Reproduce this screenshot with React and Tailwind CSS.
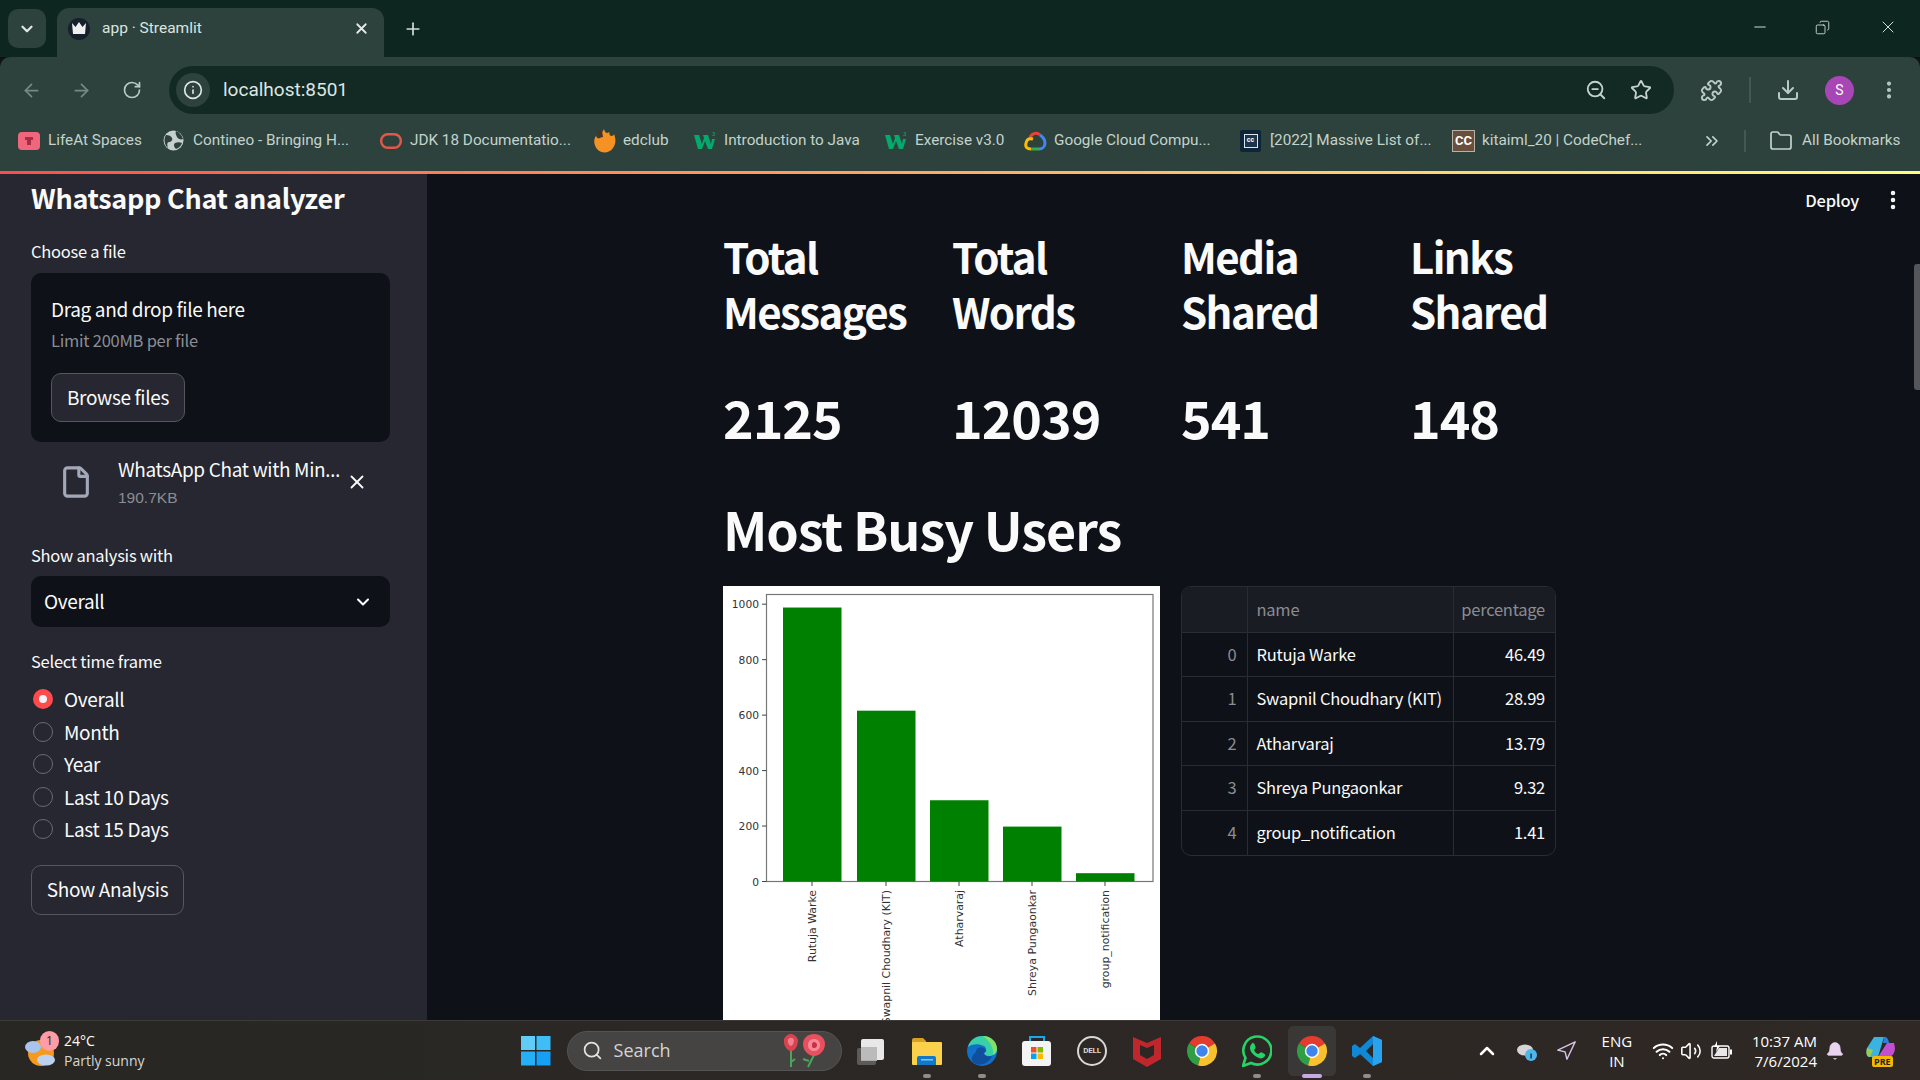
import { ArrowLeft, ArrowRight, RotateCw, Info, ZoomOut, Star, Puzzle, Download, MoreVertical, Plus, X, ChevronDown, ChevronsRight, Folder, Minus, Search, ChevronUp, Navigation, Wifi, Volume2, Bell, Copy, File } from 'lucide-react';

const bookmarks = [
  { label: 'LifeAt Spaces', width: 'w-[145px]', icon: 'lifeat' },
  { label: 'Contineo - Bringing H...', width: 'w-[217px]', icon: 'globe' },
  { label: 'JDK 18 Documentatio...', width: 'w-[213px]', icon: 'oracle' },
  { label: 'edclub', width: 'w-[101px]', icon: 'flame' },
  { label: 'Introduction to Java', width: 'w-[191px]', icon: 'w3' },
  { label: 'Exercise v3.0', width: 'w-[139px]', icon: 'w3' },
  { label: 'Google Cloud Compu...', width: 'w-[216px]', icon: 'gcloud' },
  { label: '[2022] Massive List of...', width: 'w-[212px]', icon: 'cc' },
  { label: 'kitaiml_20 | CodeChef...', width: 'w-[228px]', icon: 'chef' },
];

const stats = [
  { title: ['Total', 'Messages'], value: '2125' },
  { title: ['Total', 'Words'], value: '12039' },
  { title: ['Media', 'Shared'], value: '541' },
  { title: ['Links', 'Shared'], value: '148' },
];

const users = [
  { name: 'Rutuja Warke', pct: '46.49', count: 988 },
  { name: 'Swapnil Choudhary (KIT)', pct: '28.99', count: 616 },
  { name: 'Atharvaraj', pct: '13.79', count: 293 },
  { name: 'Shreya Pungaonkar', pct: '9.32', count: 198 },
  { name: 'group_notification', pct: '1.41', count: 30 },
];

const timeFrames = ['Overall', 'Month', 'Year', 'Last 10 Days', 'Last 15 Days'];

function BookmarkIcon({ type }) {
  if (type === 'lifeat') return (
    <svg width="22" height="18" viewBox="0 0 22 18"><rect width="22" height="18" rx="4" fill="#f0667c" /><path d="M7 5h8v3h-2v5H9V8H7z" fill="#a82c45" /></svg>
  );
  if (type === 'globe') return (
    <svg width="21" height="21" viewBox="0 0 21 21"><circle cx="10.5" cy="10.5" r="10" fill="#c5d0cc" /><path d="M3 5c3 0 5 1 6 3s-1 4-3 4-2 3-1 6C2 16 0 9 3 5zM13 1c3 1 6 4 7 8-2 1-5 0-6-2s-2-4-1-6zM12 13c2-1 5-1 7 0-1 3-3 5-6 6-2-2-3-4-1-6z" fill="#2d423c" /></svg>
  );
  if (type === 'oracle') return (
    <svg width="22" height="16" viewBox="0 0 22 16"><rect x="1.2" y="1.2" width="19.6" height="13.6" rx="6.5" fill="none" stroke="#e2584a" strokeWidth="2.4" /></svg>
  );
  if (type === 'flame') return (
    <svg width="23" height="26" viewBox="0 0 23 26"><path d="M11 1c1 4 3 5 5 3 1 2 0 3 2 4 2 0 3-1 3-2 2 5 2 10-1 14-3 5-11 6-15 2C1 18 0 12 3 8c1 2 2 3 4 2 1-3 2-6 4-9z" fill="#f59223" /><path d="M4 2l5 1 1 6-4 1z" fill="#4a3324" /></svg>
  );
  if (type === 'w3') return (
    <svg width="22" height="20" viewBox="0 0 22 20"><path d="M0 4h5l3 9 2-6-1-3h5l3 9 1-5h3l-3 10h-4l-3-8-3 8H4z" fill="#04aa6d" /><text x="18" y="5" fontSize="6" fill="#04aa6d" fontFamily="Roboto">3</text></svg>
  );
  if (type === 'gcloud') return (
    <svg width="23" height="20" viewBox="0 0 23 20"><path d="M6 7a6 6 0 0 1 10-3" fill="none" stroke="#ea4335" strokeWidth="3" /><path d="M16 4c3 2 5 4 5 8s-3 6-6 6" fill="none" stroke="#4285f4" strokeWidth="3" /><path d="M15 18H7" stroke="#34a853" strokeWidth="3" /><path d="M7 18c-4 0-6-2-5-6s3-5 7-4" fill="none" stroke="#fbbc05" strokeWidth="3" /></svg>
  );
  if (type === 'cc') return (
    <span className="flex h-[22px] w-[21px] items-center justify-center rounded-[2px] bg-[#0e2439]"><span className="flex h-[14px] w-[14px] items-center justify-center border border-[#dfe6ea] bg-[#1c344a] text-[7px] font-bold text-white">cc</span></span>
  );
  return (
    <span className="flex h-[22px] w-[23px] items-center justify-center border border-[#b8b1a8] bg-[#69503c] text-[13px] font-bold leading-none text-white">CC</span>
  );
}

function ChromeIcon() {
  return (
    <svg width="30" height="30" viewBox="0 0 30 30">
      <path d="M15 15 2 7.5A15 15 0 0 1 28 7.5z" fill="#e33b2e" />
      <path d="M15 15 2 7.5A15 15 0 0 0 11 29.5z" fill="#2f9e44" />
      <path d="M15 15 28 7.5A15 15 0 0 1 11 29.5z" fill="#fbc02d" />
      <circle cx="15" cy="15" r="7.2" fill="#fff" />
      <circle cx="15" cy="15" r="5.7" fill="#3f84ec" />
    </svg>
  );
}

function TaskIcon({ type }) {
  if (type === 'view') return (
    <svg width="30" height="30" viewBox="0 0 30 30"><rect x="0" y="12" width="19" height="17" rx="2" fill="#5c5b59" /><rect x="4" y="9" width="16" height="16" fill="#aaa" /><rect x="4" y="3" width="23" height="21" rx="2" fill="#e8e8e8" /><rect x="4" y="11" width="16" height="13" fill="#bbb" /></svg>
  );
  if (type === 'files') return (
    <svg width="30" height="30" viewBox="0 0 30 30"><path d="M0 4a2 2 0 0 1 2-2h9l3 3v5H0z" fill="#d79f23" /><rect y="6" width="30" height="23" rx="1" fill="#fbd14b" /><path d="M5 22a2 2 0 0 1 2-2h15a2 2 0 0 1 2 2v7H5z" fill="#1478c8" /><rect x="9" y="23" width="12" height="1.5" fill="#7cc4f4" /></svg>
  );
  if (type === 'edge') return (
    <svg width="30" height="30" viewBox="0 0 30 30"><circle cx="15" cy="15" r="15" fill="#1171c9" /><path d="M1 11C3 3 10 0 16 0c8 0 14 6 14 13 0 5-4 7-8 7-3 0-5-1-5-3 3-1 3-5 0-7C11 7 4 8 1 11z" fill="#3ad0a7" /><path d="M16 0c8 0 14 6 14 13 0 3-2 5-4 6 1-6-2-13-10-19z" fill="#7fe06a" /><path d="M9 16c0-5 6-6 9-3 1 1 1 3-1 4 0 3 4 4 8 3-3 7-11 11-18 7-4-3-2-8 2-11z" fill="#0f4f9e" /></svg>
  );
  if (type === 'store') return (
    <svg width="30" height="30" viewBox="0 0 30 30"><path d="M8 5V1h14v4" fill="none" stroke="#1ea7e8" strokeWidth="2" /><rect y="5" width="29" height="25" rx="3" fill="#f4f4f4" /><rect x="9" y="11" width="5.5" height="5.5" fill="#f25022" /><rect x="15.5" y="11" width="5.5" height="5.5" fill="#7fba00" /><rect x="9" y="17.5" width="5.5" height="5.5" fill="#00a4ef" /><rect x="15.5" y="17.5" width="5.5" height="5.5" fill="#ffb900" /></svg>
  );
  if (type === 'dell') return (
    <span className="flex h-[30px] w-[30px] items-center justify-center rounded-full border-2 border-[#d8d8d6] font-['Roboto',sans-serif] text-[8px] font-bold tracking-tight text-[#d8d8d6]">DELL</span>
  );
  if (type === 'mcafee') return (
    <svg width="28" height="32" viewBox="0 0 28 32"><path d="M0 2l14 6 14-6v22l-14 8-14-8z" fill="#c0272d" /><path d="M7 10l7 3 7-3v10l-7 4-7-4z" fill="#2a2725" /></svg>
  );
  if (type === 'chrome') return <ChromeIcon />;
  if (type === 'whatsapp') return (
    <svg width="30" height="32" viewBox="0 0 30 32"><path d="M1 31l2.5-8A14 14 0 1 1 9 28z" fill="none" stroke="#25d366" strokeWidth="2.6" /><path d="M10 8c2-1 3 2 3.5 4s-2 2-1 4c1 2 3 3 4 3 2-1 2-2 3.500-1.500 2 1 4 2 3 3.500-2 3-5 3-8 1-4-2-7-6-7-9 0-2 1-4 2.500-5z" fill="#25d366" /></svg>
  );
  return (
    <svg width="30" height="32" viewBox="0 0 30 32"><path d="M21 1l9 4v22l-9 4L8 19l-5 4-3-2V11l3-2 5 4zM21 9l-7 7 7 7z" fill="#0f88d8" fillRule="evenodd" /><path d="M21 1l9 4v22l-9 4z" fill="#2aa3ee" /></svg>
  );
}

const taskIcons = [
  { type: 'view' },
  { type: 'files', dot: true },
  { type: 'edge', dot: true },
  { type: 'store' },
  { type: 'dell' },
  { type: 'mcafee' },
  { type: 'chrome' },
  { type: 'whatsapp', dot: true },
  { type: 'chrome', active: true },
  { type: 'vscode', dot: true },
];

function BarChart() {
  const ticks = [1000, 800, 600, 400, 200, 0];
  const barX = [60, 134, 207, 280, 353];
  return (
    <svg width="437" height="450" viewBox="0 0 437 450" className="block bg-white">
      <rect x="43.500" y="8.500" width="386.500" height="287" fill="none" stroke="#777" strokeWidth="1.200" />
      {ticks.map((t) => {
        const ty = 295.500 - t * 0.2773;
        return (
          <g key={t}>
            <line x1="39" x2="43.500" y1={ty} y2={ty} stroke="#444" />
            <text x="36" y={ty + 4} textAnchor="end" fontSize="10.700" fill="#333" fontFamily="DejaVu Sans">{t}</text>
          </g>
        );
      })}
      {users.map((u, i) => {
        const h = u.count * 0.2773;
        const cx = barX[i] + 29;
        return (
          <g key={u.name}>
            <rect x={barX[i]} y={295.500 - h} width="58.500" height={h} fill="#008000" />
            <line x1={cx} x2={cx} y1="295.500" y2="300" stroke="#444" />
            <text transform={`translate(${cx + 4} 304) rotate(-90)`} textAnchor="end" fontSize="10.900" fill="#333" fontFamily="DejaVu Sans">{u.name}</text>
          </g>
        );
      })}
    </svg>
  );
}

export default function App() {
  return (
    <div className="flex h-screen w-full flex-col overflow-hidden bg-[#0e1117] font-['Noto_Sans_CJK_SC',sans-serif] text-[#fafafa]">
      {/* Chrome tab strip */}
      <div className="flex h-[57px] shrink-0 items-start bg-[#0e2620] font-['Roboto',sans-serif]">
        <div className="ml-2 mt-[9px] flex h-[39px] w-[38px] items-center justify-center rounded-[10px] bg-[#2d423c]">
          <ChevronDown size={18} strokeWidth={3} className="text-[#dfe7e3]" />
        </div>
        <div className="ml-[11px] mt-2 flex h-[49px] w-[327px] items-center rounded-t-[12px] bg-[#2d423c] pb-[8px] pl-[11px] pr-[14px]">
          <div className="flex h-[22px] w-[22px] items-center justify-center rounded-full bg-[#14202c]">
            <svg width="16" height="13" viewBox="0 0 16 13"><path d="M1 1l3.500 4L8 0l3.500 5L15 1l-1 11H2z" fill="#eef0ee" /></svg>
          </div>
          <span className="ml-[12px] flex-1 text-[15.500px] text-[#dbe4e0]">app · Streamlit</span>
          <X size={17} strokeWidth={2.500} className="text-[#e4ebe8]" />
        </div>
        <Plus size={20} strokeWidth={2} className="ml-[19px] mt-[19px] text-[#d5dfda]" />
        <div className="ml-auto mt-[17px] flex items-center text-[#e6ecea]">
          <Minus size={18} strokeWidth={1.200} />
          <Copy size={15} strokeWidth={1.300} className="ml-[46px] -scale-x-100" />
          <X size={20} strokeWidth={1.100} className="ml-[48px] mr-[22px]" />
        </div>
      </div>

      {/* Toolbar */}
      <div className="flex h-[66px] shrink-0 items-center rounded-t-[10px] bg-[#2d423c] text-[#b9cac4]">
        <ArrowLeft size={21} className="ml-[21px] text-[#748a83]" />
        <ArrowRight size={21} className="ml-[29px] text-[#748a83]" />
        <RotateCw size={20} className="ml-[30px]" />
        <div className="ml-[27px] flex h-[48px] w-[1505px] items-center rounded-full bg-[#132a24] pl-[7px] pr-[22px]">
          <div className="flex h-[34px] w-[34px] items-center justify-center rounded-full bg-[#2d423c]">
            <Info size={20} className="text-[#dfe7e3]" />
          </div>
          <span className="ml-[13px] flex-1 font-['Roboto',sans-serif] text-[19px] text-[#dde6e2]">localhost:8501</span>
          <ZoomOut size={22} className="text-[#c4d2cd]" />
          <Star size={22} strokeWidth={2} className="ml-[23px] text-[#c4d2cd]" />
        </div>
        <Puzzle size={23} className="ml-[26px]" />
        <div className="ml-[26px] h-[26px] w-[2px] bg-[#44584f]" />
        <Download size={24} className="ml-[25px]" />
        <div className="ml-[25px] flex h-[29px] w-[29px] items-center justify-center rounded-full bg-[#a846b5] font-['Roboto',sans-serif] text-[14px] text-white">S</div>
        <MoreVertical size={22} strokeWidth={2.500} className="ml-[24px]" />
      </div>

      {/* Bookmarks bar */}
      <div className="flex h-[48px] shrink-0 items-center bg-[#2d423c] pb-[13px] pl-[18px] font-['Roboto',sans-serif] text-[15.300px] text-[#c4d2cd]">
        {bookmarks.map((b) => (
          <div key={b.label} className={`flex items-center ${b.width}`}>
            <span className="flex w-[30px] shrink-0 items-center"><BookmarkIcon type={b.icon} /></span>
            <span className="whitespace-nowrap">{b.label}</span>
          </div>
        ))}
        <ChevronsRight size={20} className="ml-[22px]" />
        <div className="ml-[22px] h-[22px] w-[2px] bg-[#44584f]" />
        <Folder size={24} strokeWidth={1.700} className="ml-[23px]" />
        <span className="ml-[9px] whitespace-nowrap">All Bookmarks</span>
      </div>

      {/* Streamlit decoration line */}
      <div className="h-[3px] shrink-0 bg-linear-to-r from-[#ff4b4b] to-[#fffd80]" />

      {/* Streamlit app */}
      <div className="relative flex min-h-0 flex-1">
        <aside className="flex w-[427px] shrink-0 flex-col bg-[#262730] pl-[31px] pr-[37px]">
          <h2 className="mt-[4px] text-[27px] font-semibold leading-[40px] tracking-[-0.3px]">Whatsapp Chat analyzer</h2>
          <label className="mt-[22px] text-[16.500px] leading-[22px] tracking-[-0.25px]">Choose a file</label>
          <div className="mt-[11px] h-[169px] rounded-[10px] bg-[#0e1117] pl-[20px] pt-[22px]">
            <p className="text-[19px] leading-[28px] tracking-[-0.35px]">Drag and drop file here</p>
            <p className="mt-[5px] text-[16.500px] leading-[24px] tracking-[-0.25px] text-[#8b8d93]">Limit 200MB per file</p>
            <button className="mt-[21px] h-[49px] w-[134px] rounded-[10px] border border-[#55565e] bg-[#262730] text-[19px] tracking-[-0.35px]">Browse files</button>
          </div>
          <div className="relative mt-[10px] flex h-[60px] items-center pl-[28px]">
            <File size={34} strokeWidth={2.200} className="text-[#a3a8b8]" />
            <div className="ml-[25px] w-[236px]">
              <p className="whitespace-nowrap text-[19px] leading-[28px] tracking-[-0.35px]">WhatsApp Chat with Min<span className="font-['Noto_Sans',sans-serif]">…</span></p>
              <p className="mt-[2px] font-['Liberation_Sans',sans-serif] text-[15.500px] leading-[24px] text-[#8b8d93]">190.7KB</p>
            </div>
            <X size={22} className="absolute left-[315px] top-[19px]" />
          </div>
          <label className="mt-[32px] text-[16.500px] leading-[22px] tracking-[-0.25px]">Show analysis with</label>
          <div className="mt-[10px] flex h-[51px] items-center justify-between rounded-[10px] bg-[#0e1117] pl-[13px] pr-[17px]">
            <span className="text-[19px] tracking-[-0.35px]">Overall</span>
            <ChevronDown size={20} strokeWidth={2.500} />
          </div>
          <label className="mt-[23px] text-[16.500px] leading-[22px] tracking-[-0.25px]">Select time frame</label>
          <div className="mt-[11px] flex flex-col">
            {timeFrames.map((t, i) => (
              <div key={t} className="flex h-[32.500px] items-center">
                {i === 0 ? (
                  <span className="ml-[2px] flex h-[20px] w-[20px] items-center justify-center rounded-full bg-[#ff4b4b]">
                    <span className="h-[8px] w-[8px] rounded-full bg-[#f4f4f6]" />
                  </span>
                ) : (
                  <span className="ml-[2px] h-[20px] w-[20px] rounded-full border border-[#6a6b73]" />
                )}
                <span className="ml-[11px] text-[19px] tracking-[-0.35px]">{t}</span>
              </div>
            ))}
          </div>
          <button className="mt-[19px] h-[50px] w-[153px] rounded-[10px] border border-[#55565e] text-[19px] tracking-[-0.35px]">Show Analysis</button>
        </aside>

        <main className="min-w-0 flex-1 pl-[296px]">
          <div className="grid w-[896px] grid-cols-4 gap-x-[20px] pt-[54px]">
            {stats.map((s) => (
              <div key={s.value}>
                <h2 className="text-[42px] font-semibold leading-[55px] tracking-[-1.6px]">{s.title[0]}<br />{s.title[1]}</h2>
                <p className="mt-[46px] text-[52px] font-bold leading-[66px] tracking-[-1px]">{s.value}</p>
              </div>
            ))}
          </div>
          <h1 className="mt-[46px] text-[52px] font-bold leading-[66px] tracking-[-1px]">Most Busy Users</h1>
          <div className="mt-[24px] flex items-start gap-[21px]">
            <BarChart />
            <div className="w-[375px] overflow-hidden rounded-[10px] border border-[#2a2c33] text-[16.500px] tracking-[-0.25px]">
              <table className="w-full table-fixed border-collapse">
                <thead>
                  <tr className="h-[45px] border-b border-[#2a2c33] bg-[#1a1c24] text-[#8b8d93]">
                    <th className="w-[65px] border-r border-[#2a2c33]" />
                    <th className="w-[206px] border-r border-[#2a2c33] pl-[9px] text-left font-normal">name</th>
                    <th className="pr-[10px] text-right font-normal">percentage</th>
                  </tr>
                </thead>
                <tbody>
                  {users.map((u, i) => (
                    <tr key={u.name} className="h-[44.500px] border-b border-[#2a2c33] last:border-b-0">
                      <td className="border-r border-[#2a2c33] pr-[10px] text-right text-[#8b8d93]">{i}</td>
                      <td className="whitespace-nowrap border-r border-[#2a2c33] pl-[9px]">{u.name}</td>
                      <td className="pr-[10px] text-right">{u.pct}</td>
                    </tr>
                  ))}
                </tbody>
              </table>
            </div>
          </div>
        </main>

        {/* header overlay */}
        <div className="absolute right-[19px] top-[14px] flex items-center">
          <span className="text-[16.500px] font-medium leading-[24px] tracking-[-0.25px]">Deploy</span>
          <MoreVertical size={24} strokeWidth={2.500} className="ml-[22px] -mr-[4px]" />
        </div>
        <div className="absolute right-0 top-[90px] h-[126px] w-[6px] rounded-l-[3px] bg-[#55565c]" />
      </div>

      {/* Windows taskbar */}
      <div className="relative flex h-[60px] shrink-0 items-center border-t border-[#3d3b39] bg-linear-to-r from-[#282724] to-[#2f2825] font-['Open_Sans',sans-serif] text-white">
        <div className="relative ml-[25px] h-[36px] w-[32px]">
          <svg width="32" height="36" viewBox="0 0 32 36"><circle cx="16" cy="20" r="13" fill="#f59a1c" /><ellipse cx="8" cy="14" rx="8" ry="6" fill="#a9c4ec" /><ellipse cx="21" cy="27" rx="9" ry="5.500" fill="#bcd2f0" /></svg>
          <span className="absolute left-[15px] -top-[2px] flex h-[20px] w-[19px] items-center justify-center rounded-full bg-[#ff9ca8] text-[12px] text-[#30201f]">1</span>
        </div>
        <div className="ml-[7px] flex flex-col text-[14px] leading-[20px]">
          <span>24°C</span>
          <span className="text-[#d8d6d4]">Partly sunny</span>
        </div>

        <svg width="30" height="30" viewBox="0 0 30 30" className="ml-[376px]">
          <rect width="14" height="14" fill="#5fcdf8" /><rect x="15.500" width="14" height="14" fill="#3fbdf7" /><rect y="15.500" width="14" height="14" fill="#25b0f5" /><rect x="15.500" y="15.500" width="14" height="14" fill="#15a0f5" />
        </svg>
        <div className="ml-[16px] flex h-[40px] w-[275px] items-center rounded-full border border-[#565452] bg-[#454442] pl-[14px] pr-[12px]">
          <Search size={21} className="text-[#e2e2e2]" />
          <span className="ml-[11px] flex-1 text-[18px] text-[#d4d4d2]">Search</span>
          <svg width="48" height="36" viewBox="0 0 48 36">
            <path d="M10 16v18M14 26l-4 3M34 20l-7 14M28 28l-6-2" fill="none" stroke="#4ba45b" strokeWidth="2" />
            <path d="M3 6c2-4 5-5 7-5s6 2 7 6c0 6-3 11-7 11S2 12 3 6z" fill="#d9434f" />
            <path d="M7 7c1-3 5-3 6 0 0 3-2 6-3 6S6 10 7 7z" fill="#f08090" />
            <path d="M22 11c0-6 5-10 11-10s11 4 11 10-5 12-11 12-11-6-11-12z" fill="#e8505f" />
            <path d="M27 12c0-4 3-6 6-6s6 2 6 6-3 6-6 6-6-2-6-6z" fill="#f58a96" />
            <path d="M31 12c0-2 1-3 2-3s3 1 3 3-1 3-3 3-2-1-2-3z" fill="#c92e43" />
          </svg>
        </div>

        <div className="absolute left-[857px] top-0 flex h-full items-center gap-[25px]">
          {taskIcons.map((t, i) => (
            <div key={i} className="relative flex h-[50px] w-[30px] items-center justify-center">
              {t.active && <div className="absolute -inset-x-[9px] inset-y-0 rounded-[5px] border border-[#3a3836] bg-[#3a3836]" />}
              <div className="relative"><TaskIcon type={t.type} /></div>
              {t.dot && <div className="absolute -bottom-[2px] h-[4px] w-[8px] rounded-full bg-[#8f8d8b]" />}
              {t.active && <div className="absolute -bottom-[2px] h-[4px] w-[20px] rounded-full bg-[#c8a9e0]" />}
            </div>
          ))}
        </div>

        <div className="absolute right-[24px] top-0 flex h-full items-center">
          <ChevronUp size={24} strokeWidth={2.500} />
          <svg width="22" height="22" viewBox="0 0 22 22" className="ml-[17px]"><ellipse cx="9" cy="10" rx="8" ry="5.500" fill="#d5d5d5" /><circle cx="15" cy="15" r="6" fill="#4fb6ec" /><rect x="14.300" y="13.500" width="1.500" height="5" fill="#16394d" /></svg>
          <Navigation size={22} strokeWidth={1.500} className="ml-[17px] text-[#d8c4ea]" />
          <div className="ml-[21px] flex w-[38px] flex-col items-center text-[15px] leading-[20px]"><span>ENG</span><span>IN</span></div>
          <Wifi size={22} strokeWidth={2.200} className="ml-[16px]" />
          <Volume2 size={22} strokeWidth={1.700} className="ml-[6px]" />
          <svg width="22" height="22" viewBox="0 0 22 22" className="ml-[9px]">
            <rect x="1" y="6" width="17" height="12" rx="2" fill="none" stroke="#fff" strokeWidth="1.400" />
            <path d="M3 16l5-8h8v8z" fill="#e8e8e8" />
            <rect x="19" y="9.500" width="2" height="5" fill="#fff" />
            <path d="M6 1 3 7h3l-1 5 4-6H6z" fill="#fff" />
          </svg>
          <div className="ml-[19px] flex flex-col items-end text-[15px] leading-[20px]"><span>10:37 AM</span><span>7/6/2024</span></div>
          <Bell size={20} fill="#e8d4f0" strokeWidth={1} className="ml-[8px] text-[#e8d4f0]" />
          <div className="relative ml-[21px] h-[30px] w-[30px]">
            <svg width="30" height="24" viewBox="0 0 30 24"><path d="M8 1h10l-6 20H4C0 21 0 16 1 12z" fill="#3bb3e0" /><path d="M18 1c3 0 4 1 5 6h-6z" fill="#2d7fd8" /><path d="M12 21h10c4 0 7-4 7-9l-1-5h-7z" fill="#c24fd1" /><path d="M4 21c-4 0-4-5-3-9l6 2-3 7z" fill="#9bcb4f" /></svg>
            <span className="absolute -bottom-[1px] left-[6px] rounded-[2px] bg-[#f5b800] px-[2px] text-[9px] font-bold leading-[11px] text-[#222]">PRE</span>
          </div>
        </div>
      </div>
    </div>
  );
}
